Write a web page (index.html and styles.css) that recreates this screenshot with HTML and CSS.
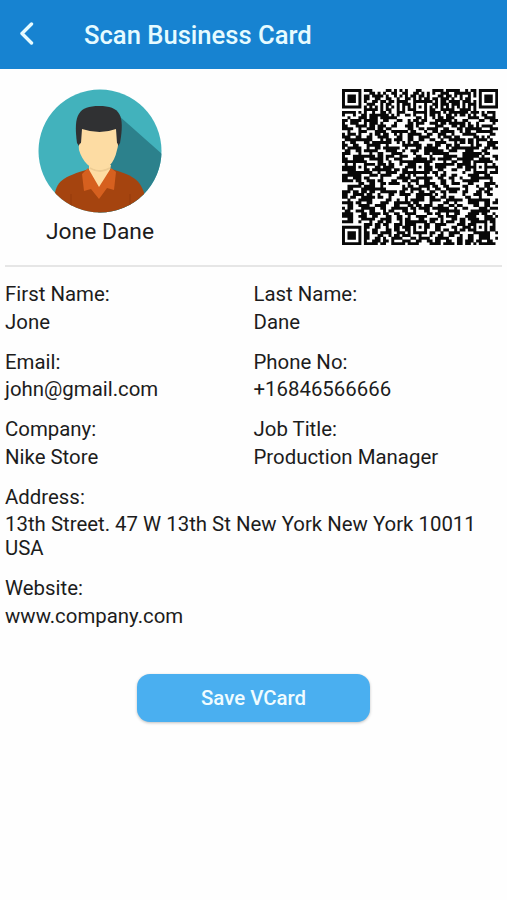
FILE: index.html
```
<!DOCTYPE html>
<html lang="en">

<head>
    <meta charset="utf-8">
    <title>Scan Business Card</title>
    <link rel="stylesheet" href="styles.css">
</head>

<body>
    <header class="topbar">
        <svg class="back" width="16" height="24" viewBox="0 0 16 24">
            <path d="M13.5 3 L4 12.5 L13.5 22" fill="none" stroke="#e6fbff" stroke-width="3.4" stroke-linecap="round" stroke-linejoin="round" />
        </svg>
        <h1 class="title">Scan Business Card</h1>
    </header>

    <section class="profile">
        <div class="person">
            <svg class="avatar" width="124" height="124" viewBox="0 0 124 124">
                <clipPath id="round">
                    <circle cx="62" cy="62" r="61.5" />
                </clipPath>
                <g clip-path="url(#round)">
                    <rect width="124" height="124" fill="#42b2bc" />
                    <path d="M80 26 L124 65 V124 H60 L70 70 Z" fill="#2c818c" />
                    <path d="M16 110 C18 91 25 88 51 80 H73 C97 87 104 91 108 112 L96 124 H28 Z" fill="#a5440f" />
                    <path d="M33 105 V124 M92 105 V124" stroke="#953b0d" stroke-width="1" />
                    <path d="M51 76 H73 L71 87 L61 104 L51 87 Z" fill="#fddca3" />
                    <path d="M50 79 L61 98 L73 79 L78 83 L76 101 L69 99 L61 110 L53 100 L46 102 L44 85 Z" fill="#d6601f" />
                    <path d="M52 79 Q62 85 72 79" fill="none" stroke="#edcc94" stroke-width="2" />
                    <path d="M39 54 C35 25 41 17 61 17 C82 17 87 26 82 54 L78 60 H43 Z" fill="#303133" />
                    <path d="M44 40 Q62 46 78 40 L79 54 Q81 55 79 61 C76 75 69 81 61 81 C53 81 44 72 41 61 Q40 55 43 54 Z" fill="#fddca3" />
                </g>
            </svg>
            <div class="name">Jone Dane</div>
        </div>
        <svg class="qr" id="qr" width="156" height="156" viewBox="0 0 57 57"></svg>
    </section>

    <main class="details">
        <div class="field">
            <div>First Name:</div>
            <div>Jone</div>
        </div>
        <div class="field">
            <div>Last Name:</div>
            <div>Dane</div>
        </div>
        <div class="field">
            <div>Email:</div>
            <div>john@gmail.com</div>
        </div>
        <div class="field">
            <div>Phone No:</div>
            <div>+16846566666</div>
        </div>
        <div class="field">
            <div>Company:</div>
            <div>Nike Store</div>
        </div>
        <div class="field">
            <div>Job Title:</div>
            <div>Production Manager</div>
        </div>
        <div class="field wide">
            <div>Address:</div>
            <div>13th Street. 47 W 13th St New York New York 10011 USA</div>
        </div>
        <div class="field wide">
            <div>Website:</div>
            <div>www.company.com</div>
        </div>
    </main>

    <button class="save">Save VCard</button>

    <script src="qr.js"></script>
</body>

</html>
```
FILE: styles.css
```
* {
    box-sizing: border-box;
    margin: 0;
    padding: 0;
}

body {
    min-height: 900px;
    background: #fefefe;
    color: #1c1c1c;
    font-family: Roboto, sans-serif;
    font-size: 20.4px;
    line-height: 23.8px;
}

.topbar {
    display: flex;
    align-items: center;
    height: 69px;
    padding-left: 18px;
    background: #1783d1;
}

.back {
    margin-top: -3px;
}

.title {
    margin-left: 50px;
    color: #e6fbff;
    font-size: 25.6px;
    font-weight: 500;
    line-height: 30px;
}

.profile {
    display: flex;
    justify-content: space-between;
    height: 198px;
    margin: 0 5px;
    padding: 20px 4px 0 33px;
    border-bottom: 2px solid #e6e6e6;
}

.person {
    display: flex;
    flex-direction: column;
    align-items: center;
    width: 124px;
}

.name {
    margin-top: 6px;
    font-size: 22.8px;
    line-height: 26px;
    white-space: nowrap;
}

.qr {
    display: block;
}

.details {
    display: grid;
    grid-template-columns: 1fr 1fr;
    row-gap: 16.2px;
    padding: 16px 5px 0;
}

.field {
    display: grid;
    row-gap: 3.8px;
}

.wide {
    grid-column: 1 / 3;
}

.save {
    display: block;
    width: 233px;
    height: 48px;
    margin: 45px auto 0;
    border: none;
    border-radius: 13px;
    background: #4aaff0;
    box-shadow: 0 1px 3px rgba(0, 0, 0, 0.25);
    color: #f0fcff;
    font-family: inherit;
    font-size: 20.4px;
    font-weight: 500;
}
```
FILE: qr.js
```
var ns = "http://www.w3.org/2000/svg";
var svg = document.getElementById("qr");
var size = 57;

// data modules, one string per row
var rows = [
    "#######.###.....##.#.#.#...##....####.#####..#.##.#######",
    "#.....#...##.#.#..##..##..##.#.#.#..###..######.#.#.....#",
    "#.###.#.##.####.#..#.#.#.##.##.#...##.##.#.#..#.#.#.###.#",
    "#.###.#.##..##..##..#..##.#.#.##.##.###.#..#.##...#.###.#",
    "#.###.#.#..##.##.##.####..#.#####.#.##.####.###.#.#.###.#",
    "#.....#..###..#.##..#.###.#...#..##.###.###.#.###.#.....#",
    "#######.#.#.#.#.#.#.#.#.#.#.#.#.#.#.#.#.#.#.#.#.#.#######",
    "........#####.#.##..#.#.###...#.##..#####..####.#........",
    "#####.#.#..#..##.#..###...#####.####.#.#######.###.#.###.",
    "#...#..##.#######.#.#..##.#...#.##.#..##.#.##.#.#..##..#.",
    "..#...###.###.######.......##.#..#.##.###.....####..####.",
    "##.####.#####..##...##..#.##.##...######.#..##....##..###",
    "#..###..#.###.#....#....##.###..###.##.######.#..#.....#.",
    "##...####.##.###..##...###.#......###...##.##.##.#.####..",
    "####..#..###.##.##......##..##.####..##...##.######...###",
    "..#...###...####..######.##...#..##.#####..#.##..######..",
    "#.###.#...#.##.##..#.#..#####..##..###..#...#####.....##.",
    "###..##..##..####...##..##..####...#.###.##.....##.#.#...",
    ".##########...#.##.###..##..##..##..#..######.##.####.#..",
    "#..##...##.#######..#.#.#.##......####...#.##.##.#...####",
    "##..##...#####..#.....#######..##.##..##.##....#.##..###.",
    "#.#####..#..##.######..#...##.#####...#.##########..##.##",
    ".##..##.#####...####..#..###..#######..###...###...##....",
    "###...#...#..##...####....#...##.######.....#######.##...",
    "#...########.##.###..###...##...#....#####..######.#...##",
    "##..####..#####.#..###....#####.##.#####..######..####..#",
    "#####.###....##..#...#####.....##....#..##..###....####..",
    ".#..########.###.##..#..##....##..#######.#####.##.....#.",
    "#######.#...##.####....##########.####....##.#######.####",
    "######..##.#######.##.##...#...##..##...##...##..##.....#",
    "..####.#.##..#..####..####....##.##..#......#...###...###",
    "#######...###.####...##.#.#...#...#.##..##....####..##...",
    "##..###.##....#.....#####..######..##..##..#...########..",
    "####.##..###.##...##..##.###..##....##..#...######....#..",
    "......##..##..##.####...#..#..####..##..###...##....####.",
    "..#####.####..#.......#.##..####.##..##.....##...#..##..#",
    "..##...#########......##.####..#..##..#####..#....##.##..",
    "###.##.##.##..######.##..#..##..##..##.###..##...##.##...",
    "##..####.##..#...##..####..######.#..#......#...###..##..",
    "##.##..#####.##..#.....#...###..##..##.##....##...#......",
    "..#...#####.....##..#..#.#####..####..######..########..#",
    "####.##..##...###..######.##....#....##..#....####..##.##",
    "..##..####..####...##...##.##.###..##..##.##....##..##...",
    "#.##...#####..##..######.##.####.######..#..##....###.###",
    ".##..###..##...#.##...##..#...##...########....#######...",
    "####...##.####.##..##..####....##.##..#..##...####.##..#.",
    "####..###..##...##..##..#..####....##.####...####...###.#",
    "..##...#####..####..##.##...##..###.#...##.##.####..####.",
    "####..#...#..##.##...#.####...#.##..#.###..##..######.##.",
    "........###.##.##..###.####...##..####....###.###...#..#.",
    "#######.##..##..#..##.###.#.#.##..##....##..###.#.#.#.##.",
    "#.....#.#..##...##.##..##.#...#...##.##..#.##.###...#.##.",
    "#.###.#.##.##.####..###.#.#####.##..#..####.....######..#",
    "#.###.#.##...##..#.##.###...#...#..##..##..#..##..####...",
    "#.###.#.##..##.#..####...##.####..#####...##..##..####..#",
    "#.....#.#..###.##.#...###..##..##.##..##..##.###.##..##..",
    "#######.#####.##..#####.####....####.####.##.##.#.######."
];

var grid = rows.map(function (r) {
    return r.padEnd(size, ".").slice(0, size).split("");
});

// square ring with a centre block, outer radius r
function marker(cx, cy, r, pad) {
    for (var y = -r - pad; y <= r + pad; y++) {
        for (var x = -r - pad; x <= r + pad; x++) {
            if (!grid[cy + y] || grid[cy + y][cx + x] === undefined) continue;
            var d = Math.max(Math.abs(x), Math.abs(y));
            grid[cy + y][cx + x] = (d == r || d <= r - 2) ? "#" : ".";
        }
    }
}

marker(3, 3, 3, 1);
marker(53, 3, 3, 1);
marker(3, 53, 3, 1);
marker(28, 6, 2, 0);
marker(6, 28, 2, 0);
marker(28, 28, 2, 0);
marker(50, 28, 2, 0);
marker(28, 50, 2, 0);
marker(50, 50, 2, 0);

// modules overlap a little so no seams show between them
var d = "";
for (var y = 0; y < size; y++) {
    for (var x = 0; x < size; x++) {
        if (grid[y][x] == "#") d += "M" + x + " " + y + "h1.08v1.08h-1.08z";
    }
}

var path = document.createElementNS(ns, "path");
path.setAttributeNS(null, "d", d);
path.setAttributeNS(null, "fill", "#080808");
svg.appendChild(path);
```
